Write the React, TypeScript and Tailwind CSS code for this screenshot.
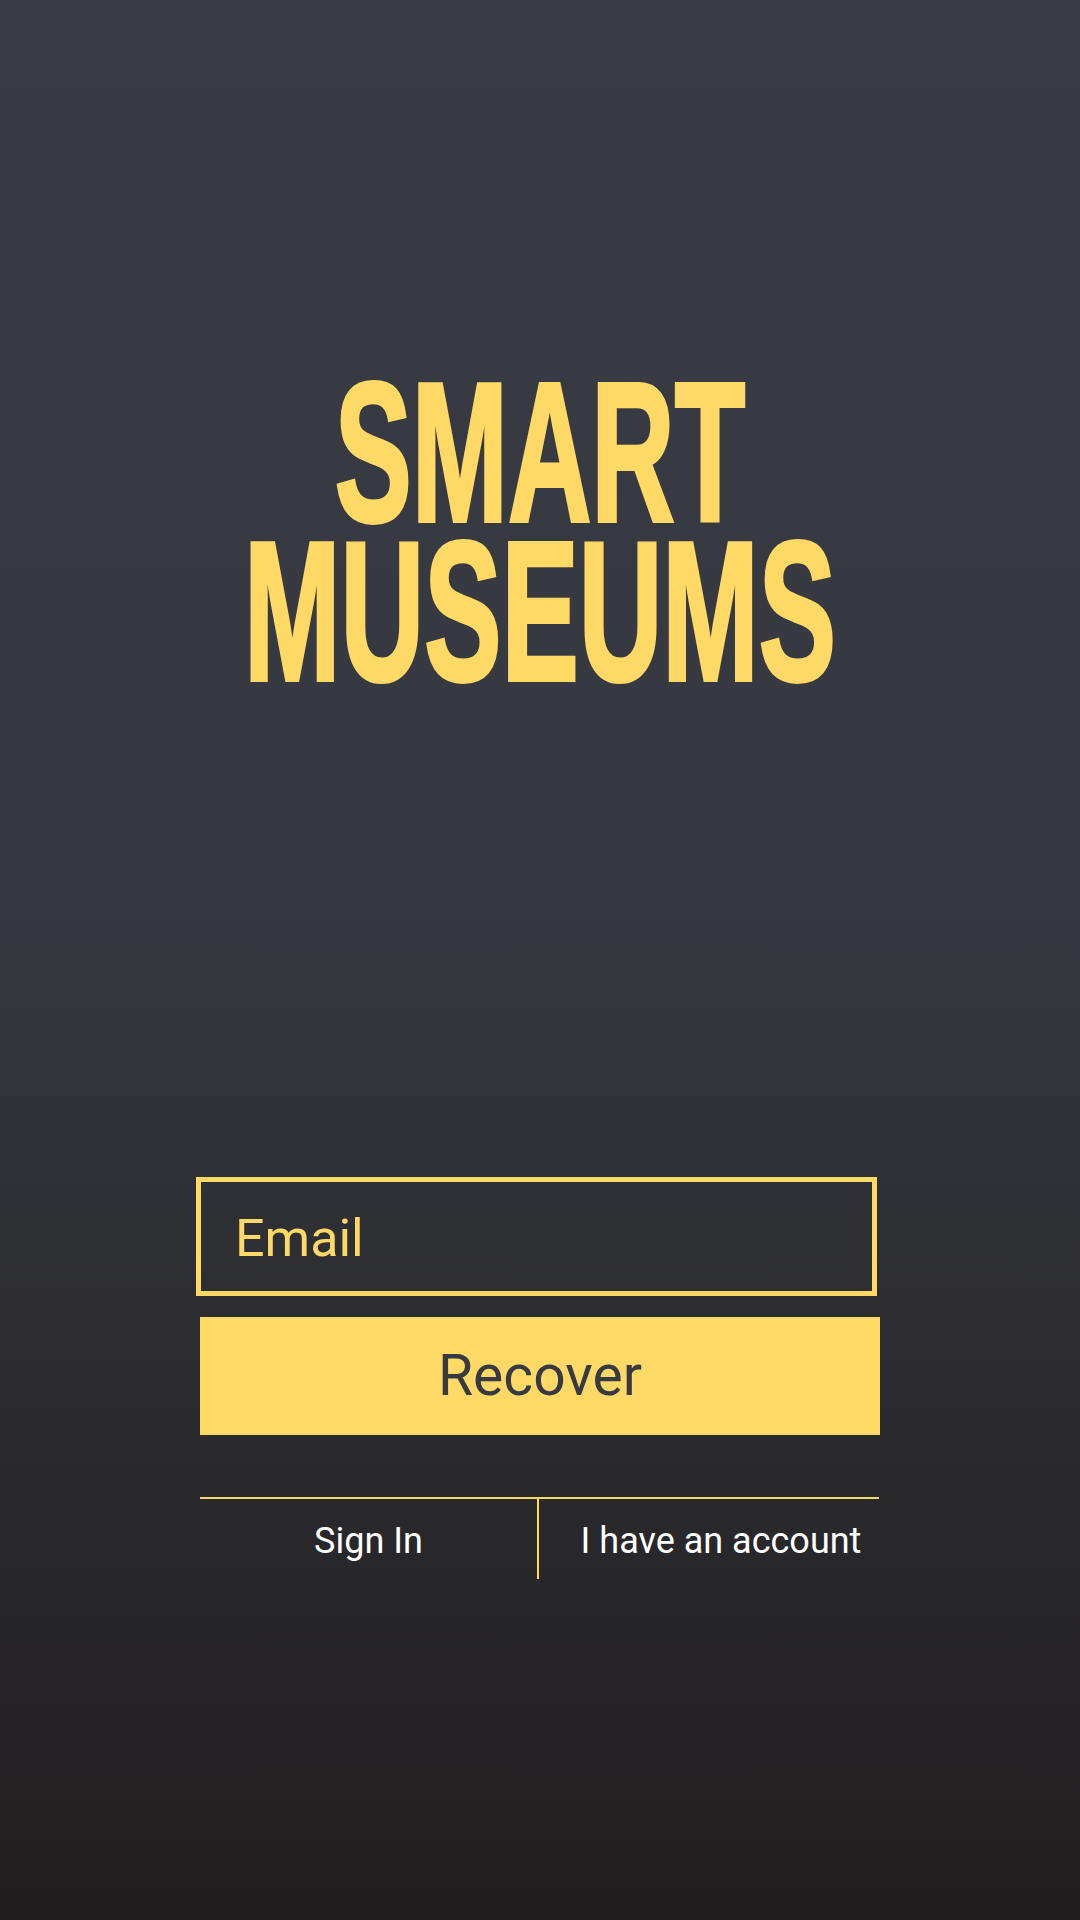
import { useState } from "react";

export default function App() {
  const [email, setEmail] = useState("");

  return (
    <main className="flex min-h-[1920px] w-full flex-col items-center bg-linear-to-b from-[#383b43] via-[#363940] via-45% to-[#211e1f] font-['Roboto','Liberation_Sans',sans-serif]">
      {/* Logo wordmark */}
      <h1 className="mt-[373px] flex flex-col items-center font-['Liberation_Sans','Arial',sans-serif] text-[198px] font-bold leading-[159px] text-[#ffd966] [-webkit-text-stroke:4px_#ffd966]">
        <span className="inline-block scale-x-[0.583] whitespace-nowrap">SMART</span>
        <span className="inline-block scale-x-[0.585] whitespace-nowrap">MUSEUMS</span>
      </h1>

      <form
        onSubmit={(e) => e.preventDefault()}
        className="mt-[486px] flex w-[680px] flex-col"
      >
        <input
          type="email"
          value={email}
          onChange={(e) => setEmail(e.target.value)}
          placeholder="Email"
          className="-ml-[4px] h-[119px] w-[681px] border-[5px] border-[#ffd966] bg-transparent pl-[34px] pt-[4px] text-[52px] text-[#ffd966] outline-none placeholder:text-[#ffd966]"
        />
        <button
          type="submit"
          className="mt-[21px] h-[118px] w-[680px] bg-[#ffd966] text-[57px] text-[#373a42]"
        >
          Recover
        </button>

        <div className="mt-[62px] flex h-[82px] w-[679px] border-t-2 border-[#ffd966]">
          <a href="#" className="flex w-[337px] items-center justify-center pt-[3px] text-[36px] text-white">
            Sign In
          </a>
          <a
            href="#"
            className="flex flex-1 items-center justify-center border-l-2 border-[#ffd966] pl-[24px] pt-[3px] text-[36px] text-white"
          >
            I have an account
          </a>
        </div>
      </form>
    </main>
  );
}
